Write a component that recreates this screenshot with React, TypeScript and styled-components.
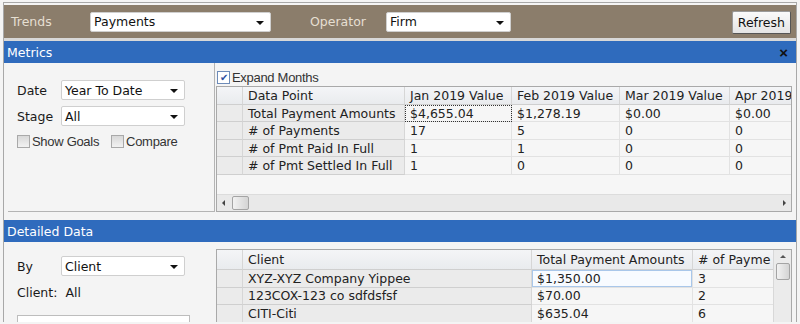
import React from 'react';
import styled, { createGlobalStyle } from 'styled-components';

const GlobalStyle = createGlobalStyle`
  body {
    margin: 0;
    background: #f4f4f4;
    font-family: "DejaVu Sans", Verdana, sans-serif;
    font-size: 12px;
    color: #1a1a1a;
    overflow: hidden;
  }
`;

const blue = '#2f6bbd';
const brown = '#8b7d6b';
const lineGray = '#b4b4b4';

const Frame = styled.div`
  margin: 2px 3px 0 3px;
  border: 1px solid #a8a8a8;
  border-bottom: none;
  padding-top: 2px;
  height: 320px;
  background: #f4f4f4;
  box-sizing: border-box;
  overflow: hidden;
`;

const TopBar = styled.div`
  height: 33px;
  background: ${brown};
  display: flex;
  align-items: center;
  padding: 0 5px 0 7px;
  border-bottom: 3px solid #d8d8d8;
`;

const BarLabel = styled.span<{ width: number }>`
  color: #e6dfd2;
  font-size: 12.5px;
  width: ${(p) => p.width}px;
`;

const Select = styled.div<{ width: number }>`
  width: ${(p) => p.width}px;
  flex-shrink: 0;
  height: 20px;
  background: #fff;
  border: 1px solid #cfcfcf;
  border-radius: 2px;
  box-sizing: border-box;
  display: flex;
  align-items: center;
  justify-content: space-between;
  padding: 0 6px 0 3px;
  font-size: 12.5px;
  color: #111;
`;

const Arrow = styled.span<{ dir: 'up' | 'down' | 'left' | 'right'; size?: number; color?: string }>`
  width: 0;
  height: 0;
  flex-shrink: 0;
  ${({ dir, size = 4, color = '#111' }) =>
    dir === 'down'
      ? `border-left: ${size}px solid transparent; border-right: ${size}px solid transparent; border-top: ${size}px solid ${color}; margin-top: 2px;`
      : dir === 'up'
      ? `border-left: ${size}px solid transparent; border-right: ${size}px solid transparent; border-bottom: ${size}px solid ${color};`
      : dir === 'left'
      ? `border-top: ${size}px solid transparent; border-bottom: ${size}px solid transparent; border-right: ${size}px solid ${color};`
      : `border-top: ${size}px solid transparent; border-bottom: ${size}px solid transparent; border-left: ${size}px solid ${color};`}
`;

const Spacer = styled.div<{ width?: number }>`
  ${(p) => (p.width ? `width: ${p.width}px;` : 'flex: 1;')}
`;

const Button = styled.button`
  height: 23px;
  padding: 0 5px;
  font-family: "DejaVu Sans", Verdana, sans-serif;
  font-size: 12.5px;
  color: #111;
  background: linear-gradient(#fafafa, #e4e4e4);
  border: 1px solid #9a9a9a;
  border-right-color: #555;
  border-bottom-color: #555;
  border-radius: 2px;
  margin-top: 1px;
`;

const PanelHeader = styled.div`
  height: 22px;
  background: ${blue};
  color: #fff;
  display: flex;
  align-items: center;
  justify-content: space-between;
  padding: 0 8px 0 3px;
  font-size: 12.5px;
`;

const Close = styled.span`
  color: #111;
  font-weight: bold;
  font-size: 15px;
  font-family: "Liberation Sans", Arial, sans-serif;
`;

const PanelBody = styled.div<{ height: number }>`
  height: ${(p) => p.height}px;
  display: flex;
  overflow: hidden;
`;

const Side = styled.div<{ bordered?: boolean; top: number }>`
  width: 207px;
  flex-shrink: 0;
  margin-left: 4px;
  padding: ${(p) => p.top}px 0 0 9px;
  box-sizing: border-box;
  display: flex;
  flex-direction: column;
  gap: 6px;
  ${(p) => (p.bordered ? `border-bottom: 1px solid ${lineGray}; border-right: 1px solid ${lineGray};` : '')}
`;

const FormRow = styled.div`
  display: flex;
  align-items: center;
`;

const FormLabel = styled.span`
  width: 44px;
  font-size: 12.5px;
`;

const CheckRow = styled.div`
  display: flex;
  align-items: center;
  gap: 12px;
  font-family: "Liberation Sans", Arial, sans-serif;
  font-size: 13px;
  color: #333;
  letter-spacing: -0.3px;
`;

const SideChecks = styled(CheckRow)`
  margin-top: 2px;
`;

const Check = styled.label`
  display: flex;
  align-items: center;
  gap: 2px;
`;

const Box = styled.span<{ checked?: boolean }>`
  width: 11px;
  height: 11px;
  border: 1px solid ${(p) => (p.checked ? '#6d8bb8' : '#a9a9a9')};
  background: ${(p) => (p.checked ? '#fff' : 'linear-gradient(#d8d8d8, #f2f2f2)')};
  display: inline-flex;
  align-items: center;
  justify-content: center;
  color: #2c4f9e;
  font-size: 10px;
  line-height: 1;
`;

const Main = styled.div`
  flex: 1;
  min-width: 0;
  display: flex;
  flex-direction: column;
  padding: 7px 4px 0 1px;
`;

const ExpandRow = styled(CheckRow)`
  height: 16px;
  padding-left: 1px;
`;

const GridWrap = styled.div<{ height: number }>`
  border: 1px solid #a9a9a9;
  background: #f6f6f6;
  height: ${(p) => p.height}px;
  display: flex;
  flex-direction: column;
  overflow: hidden;
`;

const Table = styled.div<{ cols: string; headH: number }>`
  display: grid;
  grid-template-columns: ${(p) => p.cols};
  grid-template-rows: ${(p) => p.headH}px;
  grid-auto-rows: 17.5px;
  flex: 1;
  align-content: start;
  overflow: hidden;
`;

const Cell = styled.div<{ head?: boolean; rowHead?: boolean; focus?: 'dotted' | 'blue' }>`
  border-right: 1px solid ${(p) => (p.head || p.rowHead ? '#d6d6d6' : '#e2e2e2')};
  border-bottom: 1px solid ${(p) => (p.head || p.rowHead ? '#cfcfcf' : '#e2e2e2')};
  background: ${(p) => (p.head ? 'linear-gradient(#f4f5f7, #e9ebee)' : p.rowHead ? '#ebebeb' : '#f6f6f6')};
  padding: 0 5px;
  white-space: nowrap;
  overflow: hidden;
  display: flex;
  align-items: center;
  font-size: 12.5px;
  color: #222;
  ${(p) =>
    p.focus === 'dotted'
      ? 'outline: 1px dotted #333; outline-offset: -1px;'
      : p.focus === 'blue'
      ? 'box-shadow: inset 0 0 0 1px #a9c7ea; background: #f8fbff;'
      : ''}
`;

const HScroll = styled.div`
  height: 16px;
  border-top: 1px solid #dcdcdc;
  background: #e9e9e9;
  display: flex;
  align-items: center;
  justify-content: space-between;
  padding: 0 5px;
`;

const Thumb = styled.span<{ w: number; h: number }>`
  width: ${(p) => p.w}px;
  height: ${(p) => p.h}px;
  background: linear-gradient(90deg, #f2f2f2, #d4d4d4);
  border: 1px solid #a4a4a4;
  border-radius: 2px;
  box-sizing: border-box;
`;

const ScrollLeft = styled.div`
  display: flex;
  align-items: center;
  gap: 7px;
`;

const VScroll = styled.div`
  width: 17px;
  flex-shrink: 0;
  background: #ebebeb;
  border-left: 1px solid #d8d8d8;
  display: flex;
  flex-direction: column;
  align-items: center;
  padding-top: 5px;
  gap: 5px;
`;

const GridRow = styled.div`
  display: flex;
  flex: 1;
  overflow: hidden;
`;

const Gap = styled.div<{ h: number }>`
  height: ${(p) => p.h}px;
`;

const ClientLine = styled.div`
  font-size: 12.5px;
  display: flex;
  gap: 8px;
  margin-top: 3px;
`;

const ListBox = styled.div`
  width: 171px;
  height: 30px;
  background: #fff;
  border: 1px solid #bdbdbd;
  margin-top: 9px;
`;

const metricRows = [
  ['Total Payment Amounts', '$4,655.04', '$1,278.19', '$0.00', '$0.00'],
  ['# of Payments', '17', '5', '0', '0'],
  ['# of Pmt Paid In Full', '1', '1', '0', '0'],
  ['# of Pmt Settled In Full', '1', '0', '0', '0'],
];

const clientRows = [
  ['XYZ-XYZ Company Yippee', '$1,350.00', '3'],
  ['123COX-123 co sdfdsfsf', '$70.00', '2'],
  ['CITI-Citi', '$635.04', '6'],
];

export default function App() {
  return (
    <>
      <GlobalStyle />
      <Frame>
        <TopBar>
          <BarLabel width={79}>Trends</BarLabel>
          <Select width={181}>
            Payments <Arrow dir="down" />
          </Select>
          <Spacer width={39} />
          <BarLabel width={76}>Operator</BarLabel>
          <Select width={125}>
            Firm <Arrow dir="down" />
          </Select>
          <Spacer />
          <Button>Refresh</Button>
        </TopBar>

        <PanelHeader>
          Metrics <Close>×</Close>
        </PanelHeader>
        <PanelBody height={149}>
          <Side bordered top={17}>
            <FormRow>
              <FormLabel>Date</FormLabel>
              <Select width={124}>
                Year To Date <Arrow dir="down" />
              </Select>
            </FormRow>
            <FormRow>
              <FormLabel>Stage</FormLabel>
              <Select width={124}>
                All <Arrow dir="down" />
              </Select>
            </FormRow>
            <SideChecks>
              <Check>
                <Box />
                Show Goals
              </Check>
              <Check>
                <Box />
                Compare
              </Check>
            </SideChecks>
          </Side>
          <Main>
            <ExpandRow>
              <Check>
                <Box checked>✔</Box>
                Expand Months
              </Check>
            </ExpandRow>
            <GridWrap height={126}>
              <Table cols="26px 162px 107px 108px 110px 64px" headH={18}>
                <Cell head />
                <Cell head>Data Point</Cell>
                <Cell head>Jan 2019 Value</Cell>
                <Cell head>Feb 2019 Value</Cell>
                <Cell head>Mar 2019 Value</Cell>
                <Cell head>Apr 2019</Cell>
                {metricRows.map((r, i) => (
                  <React.Fragment key={i}>
                    <Cell rowHead />
                    <Cell rowHead>{r[0]}</Cell>
                    <Cell focus={i === 0 ? 'dotted' : undefined}>{r[1]}</Cell>
                    <Cell>{r[2]}</Cell>
                    <Cell>{r[3]}</Cell>
                    <Cell>{r[4]}</Cell>
                  </React.Fragment>
                ))}
              </Table>
              <HScroll>
                <ScrollLeft>
                  <Arrow dir="left" size={3} color="#444" />
                  <Thumb w={17} h={14} />
                </ScrollLeft>
                <Arrow dir="right" size={3} color="#444" />
              </HScroll>
            </GridWrap>
          </Main>
        </PanelBody>

        <Gap h={8} />
        <PanelHeader>Detailed Data</PanelHeader>
        <PanelBody height={90}>
          <Side top={14}>
            <FormRow>
              <FormLabel>By</FormLabel>
              <Select width={124}>
                Client <Arrow dir="down" />
              </Select>
            </FormRow>
            <ClientLine>
              <span>Client:</span>
              <span>All</span>
            </ClientLine>
            <ListBox />
          </Side>
          <Main>
            <GridWrap height={90}>
              <GridRow>
                <Table cols="26px 289px 161px 81px" headH={20}>
                  <Cell head />
                  <Cell head>Client</Cell>
                  <Cell head>Total Payment Amounts</Cell>
                  <Cell head># of Payme</Cell>
                  {clientRows.map((r, i) => (
                    <React.Fragment key={i}>
                      <Cell rowHead />
                      <Cell rowHead>{r[0]}</Cell>
                      <Cell focus={i === 0 ? 'blue' : undefined}>{r[1]}</Cell>
                      <Cell>{r[2]}</Cell>
                    </React.Fragment>
                  ))}
                </Table>
                <VScroll>
                  <Arrow dir="up" size={3} color="#555" />
                  <Thumb w={14} h={17} />
                </VScroll>
              </GridRow>
            </GridWrap>
          </Main>
        </PanelBody>
      </Frame>
    </>
  );
}
